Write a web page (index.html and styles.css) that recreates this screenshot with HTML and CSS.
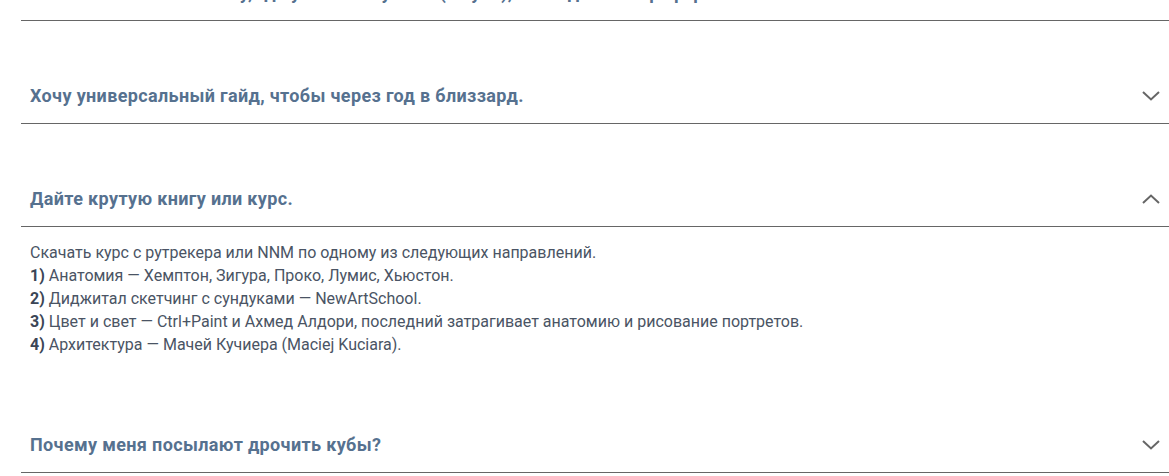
FILE: index.html
```html
<!DOCTYPE html>
<html lang="ru">
<head>
    <meta charset="UTF-8">
    <meta name="viewport" content="width=device-width, initial-scale=1.0">
    <title>FAQ</title>
    <link rel="stylesheet" href="styles.css">
</head>
<body>
    <div class="faq">
        <div class="faq-item">
            <div class="faq-head">
                <span class="faq-title">С чего начинать новичку, где учиться и у кого (с нуля), и что делать с референсами?</span>
                <svg class="chevron" width="18" height="10" viewBox="0 0 18 10"><path d="M1 1 L9 8.5 L17 1" fill="none" stroke="#666" stroke-width="2"/></svg>
            </div>
        </div>
        <div class="faq-item">
            <div class="faq-head">
                <span class="faq-title">Хочу универсальный гайд, чтобы через год в близзард.</span>
                <svg class="chevron" width="18" height="10" viewBox="0 0 18 10"><path d="M1 1 L9 8.5 L17 1" fill="none" stroke="#666" stroke-width="2"/></svg>
            </div>
        </div>
        <div class="faq-item open">
            <div class="faq-head">
                <span class="faq-title">Дайте крутую книгу или курс.</span>
                <svg class="chevron" width="18" height="10" viewBox="0 0 18 10"><path d="M1 9 L9 1.5 L17 9" fill="none" stroke="#666" stroke-width="2"/></svg>
            </div>
            <div class="faq-body">
                Скачать курс с рутрекера или NNM по одному из следующих направлений.<br>
                <b>1)</b> Анатомия — Хемптон, Зигура, Проко, Лумис, Хьюстон.<br>
                <b>2)</b> Диджитал скетчинг с сундуками — NewArtSchool.<br>
                <b>3)</b> Цвет и свет — Ctrl+Paint и Ахмед Алдори, последний затрагивает анатомию и рисование портретов.<br>
                <b>4)</b> Архитектура — Мачей Кучиера (Maciej Kuciara).
            </div>
        </div>
        <div class="faq-item">
            <div class="faq-head">
                <span class="faq-title">Почему меня посылают дрочить кубы?</span>
                <svg class="chevron" width="18" height="10" viewBox="0 0 18 10"><path d="M1 1 L9 8.5 L17 1" fill="none" stroke="#666" stroke-width="2"/></svg>
            </div>
        </div>
    </div>
</body>
</html>
```

FILE: styles.css
```css
body {
    margin: 0;
    background-color: #ffffff;
    font-family: Roboto, 'Liberation Sans', sans-serif;
    overflow: hidden;
}
.faq {
    margin: -82px 0 0 21px;
}
.faq-head {
    display: flex;
    justify-content: space-between;
    align-items: center;
    padding: 65px 9px 17px 9px;
    border-bottom: 1px solid #666666;
}
.faq-title {
    font-size: 18px;
    line-height: 20px;
    font-weight: bold;
    letter-spacing: 0.35px;
    color: #56718f;
}
.chevron {
    flex-shrink: 0;
}
.faq-body {
    padding: 14px 9px 14px 9px;
    font-size: 16px;
    line-height: 23px;
    color: #4a5464;
}
.faq-body b {
    color: #3b4656;
}
```
